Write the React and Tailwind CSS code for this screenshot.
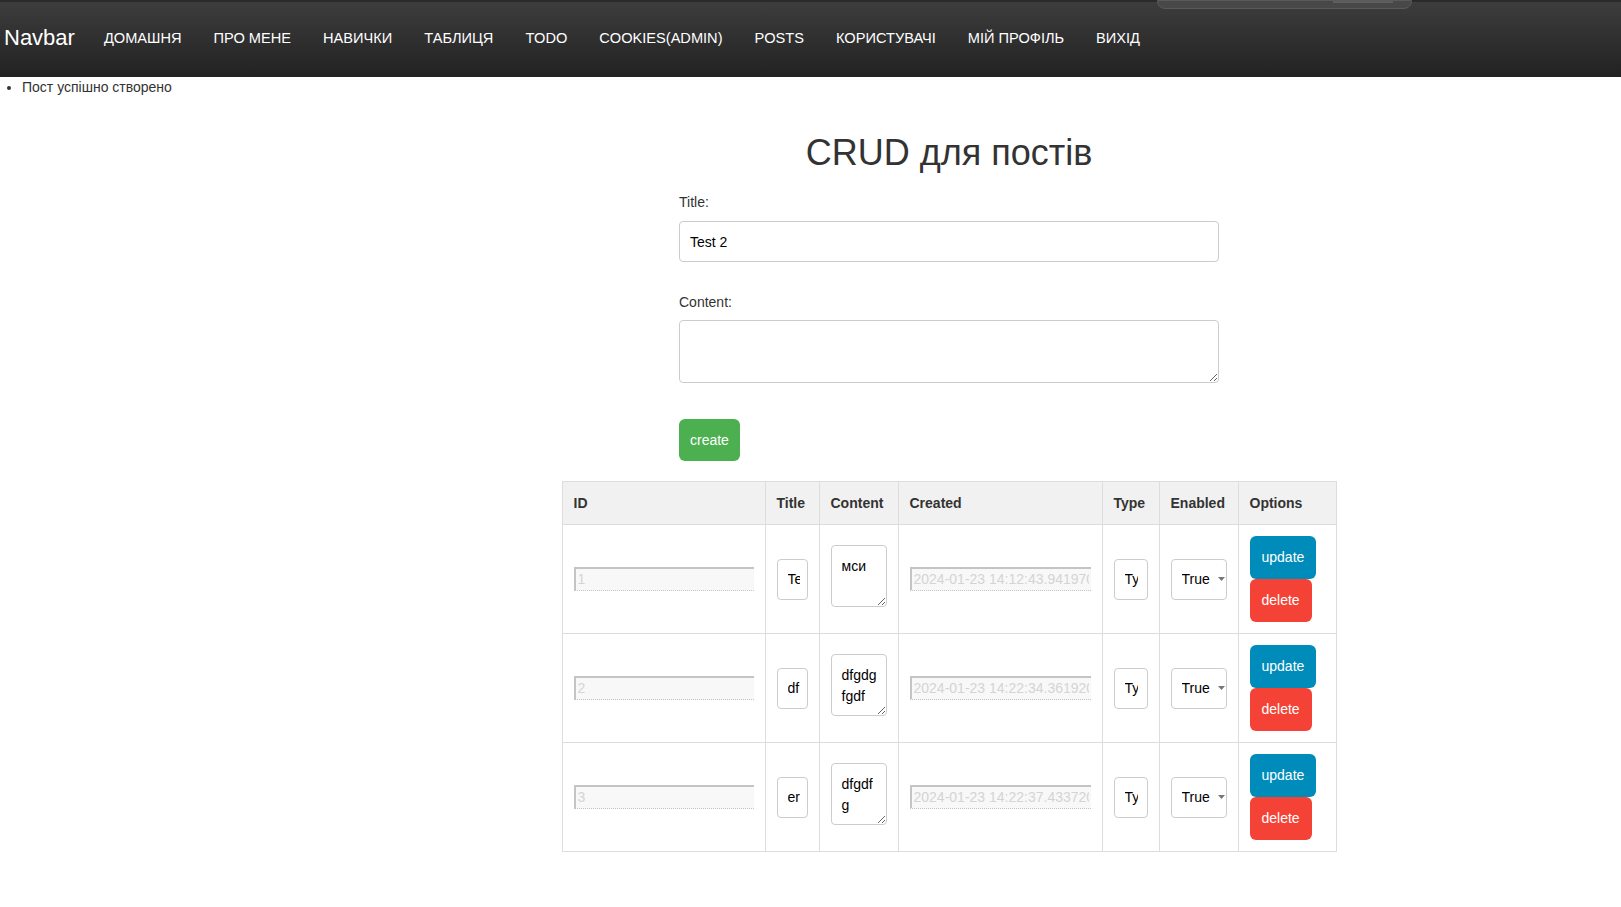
import React from "react";

const navItems = [
  "ДОМАШНЯ",
  "ПРО МЕНЕ",
  "НАВИЧКИ",
  "ТАБЛИЦЯ",
  "TODO",
  "COOKIES(ADMIN)",
  "POSTS",
  "КОРИСТУВАЧІ",
  "МІЙ ПРОФІЛЬ",
  "ВИХІД",
];

const posts = [
  { id: 1, title: "Test", content: "мси", created: "2024-01-23 14:12:43.941970" },
  { id: 2, title: "df", content: "dfgdgfgdf", created: "2024-01-23 14:22:34.361920" },
  { id: 3, title: "er", content: "dfgdfg", created: "2024-01-23 14:22:37.433720" },
];

function Navbar() {
  return (
    <nav className="relative h-[77px] flex items-center pb-[4px] border-t-2 border-[#2a2a2a] bg-gradient-to-b from-[#3d3d3d] to-[#222222] text-white">
      <span className="ml-[4px] text-[22px] leading-none">Navbar</span>
      <ul className="flex items-center ml-[13px]">
        {navItems.map((item) => (
          <li key={item} className="px-[16px] text-[14.6px] leading-[20px]">
            {item}
          </li>
        ))}
      </ul>
      {/* screen share bar peeking in at the top */}
      <div className="absolute top-[-2px] left-[1157px] w-[255px] h-[9px] rounded-b-[8px] bg-[#484848] border border-[#5a5a5a] flex justify-end pr-[18px]">
        <div className="w-[60px] h-[2px] bg-[#5e5e5e]" />
      </div>
    </nav>
  );
}

function DisabledField({ value }) {
  return (
    <input
      disabled
      value={value}
      readOnly
      className="w-full h-[24px] px-[2px] text-[14px] text-[#d4d4d4] bg-[#f8f8f8] border-t-2 border-l-2 border-b border-r-0 border-[#c4c4c4] [border-bottom-style:dotted] outline-none"
    />
  );
}

function PostRow({ post }) {
  const cell = "border border-[#dddddd] px-[11px] py-[11px] align-middle";
  return (
    <tr>
      <td className={cell}>
        <DisabledField value={post.id} />
      </td>
      <td className={cell}>
        <input
          readOnly
          value={post.title}
          className="w-full h-[41px] pl-[10px] pr-[7px] text-[14px] text-black border border-[#cccccc] rounded-[4px] bg-white"
        />
      </td>
      <td className={cell}>
        <textarea
          readOnly
          value={post.content}
          className="block w-full h-[62px] mb-[6px] pt-[10px] pb-[10px] pl-[10px] pr-[6px] text-[14px] leading-[21px] text-black border border-[#cccccc] rounded-[4px] resize-y overflow-hidden"
        />
      </td>
      <td className={cell}>
        <DisabledField value={post.created} />
      </td>
      <td className={cell}>
        <input
          readOnly
          value="Type"
          className="w-full h-[41px] pl-[10px] pr-[9px] text-[14px] text-black border border-[#cccccc] rounded-[4px] bg-white"
        />
      </td>
      <td className={cell}>
        <div className="relative">
          <select className="w-full h-[41px] pl-[10px] text-[14px] text-black border border-[#cccccc] rounded-[4px] bg-white appearance-none">
            <option>True</option>
            <option>False</option>
          </select>
          <svg
            className="absolute right-[2px] top-[18px] pointer-events-none"
            width="7"
            height="4"
            viewBox="0 0 7 4"
          >
            <path d="M0 0h7L3.5 4z" fill="#777" />
          </svg>
        </div>
      </td>
      <td className={cell}>
        <div className="flex flex-col items-start">
          <button className="h-[43px] px-[12px] rounded-[6px] bg-[#008cba] text-white text-[14px]">
            update
          </button>
          <button className="h-[43px] px-[12px] rounded-[6px] bg-[#f44336] text-white text-[14px]">
            delete
          </button>
        </div>
      </td>
    </tr>
  );
}

export default function App() {
  const th = "border border-[#dddddd] px-[11px] text-left font-bold text-[14px] text-[#333]";
  return (
    <div className="min-h-[907px] bg-white font-['Liberation_Sans',Arial,sans-serif] text-[#333]">
      <Navbar />
      <ul className="list-disc pl-[22px] text-[14px] leading-[20px]">
        <li>Пост успішно створено</li>
      </ul>

      <div className="pl-[277px] flex flex-col items-center">
        <h1 className="mt-[36px] text-[36px] leading-[40px] text-[#333]">CRUD для постів</h1>

        <div className="w-[540px] mt-[19px] flex flex-col">
          <label className="text-[14px] leading-[20px]">Title:</label>
          <input
            readOnly
            value="Test 2"
            className="mt-[9px] h-[41px] px-[10px] text-[14px] text-black border border-[#cccccc] rounded-[4px]"
          />
          <label className="mt-[30px] text-[14px] leading-[20px]">Content:</label>
          <textarea
            readOnly
            className="mt-[8px] h-[63px] p-[10px] text-[14px] border border-[#cccccc] rounded-[4px] resize-y"
          />
          <div className="mt-[36px]">
            <button className="h-[42px] px-[11px] rounded-[6px] bg-[#4caf50] text-white text-[14px]">
              create
            </button>
          </div>
        </div>

        <table className="mt-[20px] w-[774px] table-fixed border-collapse border border-[#dddddd]">
          <colgroup>
            <col className="w-[203px]" />
            <col className="w-[54px]" />
            <col className="w-[79px]" />
            <col className="w-[204px]" />
            <col className="w-[57px]" />
            <col className="w-[79px]" />
            <col className="w-[98px]" />
          </colgroup>
          <thead>
            <tr className="h-[43px] bg-[#f1f1f1]">
              <th className={th}>ID</th>
              <th className={th}>Title</th>
              <th className={th}>Content</th>
              <th className={th}>Created</th>
              <th className={th}>Type</th>
              <th className={th}>Enabled</th>
              <th className={th}>Options</th>
            </tr>
          </thead>
          <tbody>
            {posts.map((post) => (
              <PostRow key={post.id} post={post} />
            ))}
          </tbody>
        </table>
      </div>
    </div>
  );
}
